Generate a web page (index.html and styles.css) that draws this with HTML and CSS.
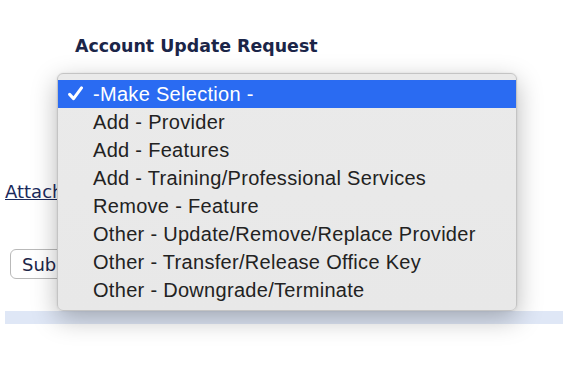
FILE: index.html
```html
<!DOCTYPE html>
<html>
<head>
<meta charset="utf-8">
<link rel="stylesheet" href="styles.css">
</head>
<body>
<main class="page">
  <h1 class="title">Account Update Request</h1>
  <div class="field"></div>
  <a class="attach" href="#">Attachments</a>
  <div class="actions"><button class="submit" type="button">Submit</button></div>
  <div class="bar"></div>
</main>
<ul class="menu">
  <li class="item selected"><svg class="check" viewBox="0 0 14 14" width="15" height="15"><path d="M1.5 7.8 L5.2 11.8 L12.6 1.8" fill="none" stroke="#fff" stroke-width="2.8" stroke-linecap="round" stroke-linejoin="round"/></svg><span>-Make Selection -</span></li>
  <li class="item"><span>Add - Provider</span></li>
  <li class="item"><span>Add - Features</span></li>
  <li class="item"><span>Add - Training/Professional Services</span></li>
  <li class="item"><span>Remove - Feature</span></li>
  <li class="item"><span>Other - Update/Remove/Replace Provider</span></li>
  <li class="item"><span>Other - Transfer/Release Office Key</span></li>
  <li class="item"><span>Other - Downgrade/Terminate</span></li>
</ul>
</body>
</html>
```
FILE: styles.css
```css
html, body {
  margin: 0;
  padding: 0;
  background: #fff;
}
body {
  width: 563px;
  height: 375px;
  overflow: hidden;
  position: relative;
  font-family: "DejaVu Sans", Verdana, sans-serif;
}
.page {
  display: flex;
  flex-direction: column;
  align-items: flex-start;
  padding-top: 35px;
}
.title {
  margin: 0 0 0 75px;
  font-size: 17.4px;
  font-weight: bold;
  color: #1b2548;
  line-height: 22px;
}
.field {
  height: 124px;
}
.attach {
  margin-left: 5px;
  font-size: 18px;
  line-height: 22px;
  color: #1b2a5c;
  text-decoration: underline;
}
.actions {
  margin-top: 46px;
  margin-left: 10px;
}
.submit {
  height: 30px;
  padding: 0 11px;
  border: 1px solid #b9b9b9;
  border-radius: 6px;
  background: #fff;
  font-family: "DejaVu Sans", Verdana, sans-serif;
  font-size: 18px;
  color: #1b2548;
}
.bar {
  margin-top: 32px;
  margin-left: 5px;
  width: 558px;
  height: 13px;
  background: #dfe7f6;
}
.menu {
  position: absolute;
  left: 57px;
  top: 73px;
  width: 458px;
  margin: 0;
  padding: 6px 0 6px;
  list-style: none;
  background: linear-gradient(#eaeaea, #e8e8e8);
  border: 1px solid #c4c4c4;
  border-radius: 6px;
  box-shadow: 0 8px 26px rgba(0, 0, 0, 0.28), 0 0 2px rgba(0, 0, 0, 0.1);
  font-family: "Liberation Sans", Arial, sans-serif;
  font-size: 20px;
  letter-spacing: 0.3px;
  color: #222;
}
.item {
  display: flex;
  align-items: center;
  height: 28px;
  padding-left: 35px;
  position: relative;
}
.item.selected {
  background: #2a6bf2;
  color: #fff;
}
.check {
  position: absolute;
  left: 10px;
  top: 6px;
}
```
